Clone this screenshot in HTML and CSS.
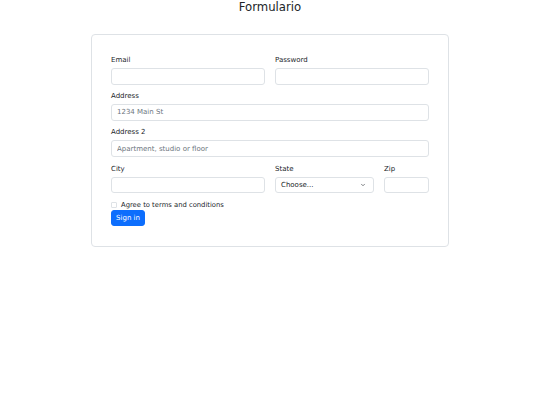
FILE: index.html
```html
<!DOCTYPE html>
<html>
<head>
<meta charset="utf-8">
<link rel="stylesheet" href="styles.css">
</head>
<body>
<h3 class="title">Formulario</h3>
<div class="card">
  <form class="form">
    <div class="row">
      <div class="field half">
        <label class="label">Email</label>
        <input class="input" type="email">
      </div>
      <div class="field half">
        <label class="label">Password</label>
        <input class="input" type="password">
      </div>
    </div>
    <div class="field">
      <label class="label">Address</label>
      <input class="input" type="text" placeholder="1234 Main St">
    </div>
    <div class="field">
      <label class="label">Address 2</label>
      <input class="input" type="text" placeholder="Apartment, studio or floor">
    </div>
    <div class="row">
      <div class="field half">
        <label class="label">City</label>
        <input class="input" type="text">
      </div>
      <div class="field state">
        <label class="label">State</label>
        <div class="select">
          <span>Choose...</span>
          <svg class="chev" width="6" height="4" viewBox="0 0 16 16"><path d="M2 5l6 6 6-6" fill="none" stroke="#343a40" stroke-width="2.5" stroke-linecap="round" stroke-linejoin="round"/></svg>
        </div>
      </div>
      <div class="field zip">
        <label class="label">Zip</label>
        <input class="input" type="text">
      </div>
    </div>
    <div class="check">
      <span class="box"></span>
      <span class="check-label">Agree to terms and conditions</span>
    </div>
    <div><button class="btn" type="button">Sign in</button></div>
  </form>
</div>
</body>
</html>
```
FILE: styles.css
```css
* { box-sizing: border-box; }
body {
  margin: 0;
  font-family: "DejaVu Sans", sans-serif;
  color: #212529;
  background: #fff;
}
.title {
  margin: 0;
  text-align: center;
  font-size: 11.7px;
  font-weight: 400;
  line-height: 14px;
}
.card {
  width: 358px;
  margin: 20px 0 0 91px;
  border: 1px solid #dee2e6;
  border-radius: 4px;
  padding: 20px 19px 20px 19px;
}
.form {
  display: flex;
  flex-direction: column;
  gap: 6.7px;
}
.row {
  display: flex;
  gap: 10px;
}
.field {
  display: flex;
  flex-direction: column;
}
.half { width: 154px; }
.state { width: 99px; }
.zip { width: 45px; }
.label {
  font-size: 7px;
  line-height: 10.5px;
  margin-bottom: 2.5px;
}
.input, .select {
  height: 16.5px;
  border: 1px solid #dee2e6;
  border-radius: 3px;
  font-family: "DejaVu Sans", sans-serif;
  font-size: 7px;
  padding: 0 5px;
  color: #212529;
  outline: none;
  width: 100%;
}
.input::placeholder { color: #6c757d; }
.select {
  display: flex;
  align-items: center;
  justify-content: space-between;
  padding: 0 7px 0 5px;
}
.chev { display: block; }
.check {
  display: flex;
  align-items: center;
  gap: 4px;
  height: 10.5px;
}
.box {
  width: 6px;
  height: 6px;
  border: 1px solid #dee2e6;
  border-radius: 1px;
}
.check-label {
  font-size: 6.8px;
  line-height: 10.5px;
}
.btn {
  display: block;
  margin-top: -7px;
  background: #0d6efd;
  color: #fff;
  border: 1px solid #0d6efd;
  border-radius: 3px;
  font-family: "DejaVu Sans", sans-serif;
  font-size: 7px;
  height: 16.5px;
  width: 34px;
  padding: 0;
}
```
